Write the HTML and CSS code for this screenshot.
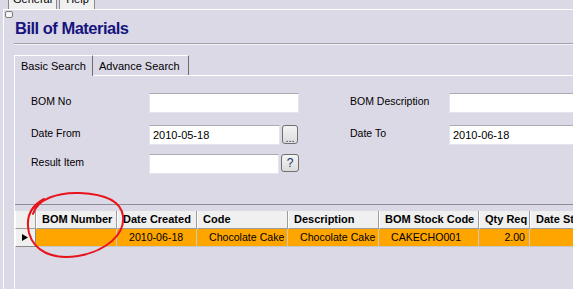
FILE: index.html
```html
<!DOCTYPE html>
<html>
<head>
  <meta charset="UTF-8">
  <title>Bill of Materials</title>
  <link rel="stylesheet" href="styles.css">
</head>
<body>
  <div class="top-tabs">
    <span class="top-tab">General</span>
    <span class="top-tab help">Help</span>
  </div>

  <div class="panel">
    <span class="panel-icon"></span>
    <h1 class="title">Bill of Materials</h1>
    <div class="rule"></div>

    <div class="tabs">
      <span class="tab active">Basic Search</span>
      <span class="tab">Advance Search</span>
    </div>

    <div class="tab-page">
      <div class="form">
        <div class="row">
          <label class="label">BOM No</label>
          <div class="field"><input class="input w150" type="text"></div>
          <label class="label">BOM Description</label>
          <div class="field"><input class="input wide" type="text"></div>
        </div>
        <div class="row gap12">
          <label class="label">Date From</label>
          <div class="field">
            <input class="input w131" type="text" value="2010-05-18">
            <button class="btn dots">...</button>
          </div>
          <label class="label">Date To</label>
          <div class="field"><input class="input wide" type="text" value="2010-06-18"></div>
        </div>
        <div class="row gap9">
          <label class="label">Result Item</label>
          <div class="field">
            <input class="input w130" type="text">
            <button class="btn ask">?</button>
          </div>
        </div>
      </div>

      <div class="grid-wrap">
        <div class="grid">
          <div class="grid-row head">
            <div class="cell rh"></div>
            <div class="cell">BOM Number</div>
            <div class="cell">Date Created</div>
            <div class="cell">Code</div>
            <div class="cell">Description</div>
            <div class="cell">BOM Stock Code</div>
            <div class="cell">Qty Req</div>
            <div class="cell">Date St</div>
          </div>
          <div class="grid-row data">
            <div class="cell rh">
              <svg width="6" height="7" viewBox="0 0 6 7"><polygon points="0,0 6,3.5 0,7" fill="#000"/></svg>
            </div>
            <div class="cell"></div>
            <div class="cell">2010-06-18</div>
            <div class="cell">Chocolate Cake</div>
            <div class="cell">Chocolate Cake</div>
            <div class="cell">CAKECHO001</div>
            <div class="cell num">2.00</div>
            <div class="cell"></div>
          </div>
        </div>
      </div>
    </div>
  </div>

  <!-- red marker circle drawn over the grid -->
  <svg class="annotation" width="573" height="289" viewBox="0 0 573 289">
    <path d="M33 214 C37 199 58 192 80 193 C104 194 121 201 123 216 C125 234 107 251 78 256 C52 260 34 251 29 233 C26 220 29 207 44 199"
          fill="none" stroke="#e8141c" stroke-width="2" stroke-linecap="round"/>
  </svg>
</body>
</html>
```

FILE: styles.css
```css
body {
  margin: 0;
  width: 573px;
  height: 289px;
  overflow: hidden;
  position: relative;
  background: #dcd9e7;
  font-family: "Liberation Sans", Arial, sans-serif;
  font-size: 11px;
  color: #000;
}

/* outer tab strip, mostly scrolled off the top */
.top-tabs {
  display: flex;
  align-items: flex-end;
  height: 9px;
  padding-left: 8px;
  gap: 2px;
  overflow: hidden;
}
.top-tab {
  flex: none;
  height: 20px;
  box-sizing: border-box;
  padding: 3px 4px 0;
  line-height: 13px;
  background: #f0f0f0;
  border: 1px solid #8a8a8a;
  border-bottom: 0;
  border-radius: 2px 2px 0 0;
}
.top-tab.help {
  padding: 3px 5px 0 6px;
}

.panel {
  margin-left: 3px;
  height: 290px;
  border-top: 1px solid #fff;
  border-left: 1px solid #fff;
}
.panel-icon {
  display: block;
  width: 6px;
  height: 5px;
  margin: 1px 0 0 1px;
  border: 1px solid #7a7a7a;
  border-radius: 2px;
  background: #f6f6f6;
}
.title {
  margin: 1px 0 0 11px;
  font-size: 16.5px;
  letter-spacing: -0.5px;
  line-height: 18px;
  font-weight: bold;
  color: #16147e;
}
.rule {
  margin: 6px 0 0 10px;
  border-top: 1px solid #a2a0a8;
  border-bottom: 1px solid #f4f2f8;
}

/* inner tabs */
.tabs {
  display: flex;
  margin: 10px 0 0 10px;
  height: 20px;
}
.tab {
  box-sizing: border-box;
  height: 20px;
  padding: 3px 6px 0 6px;
  line-height: 14px;
  border-top: 1px solid #fff;
  border-left: 1px solid #fff;
  border-right: 1px solid #6e6e6e;
}
.tab.active {
  width: 79px;
  position: relative;
  z-index: 1;
  background: #dcd9e7;
  height: 21px;
}
.tab:not(.active) {
  width: 96px;
  padding-left: 6px;
  border-left: 0;
}

.tab-page {
  margin-left: 10px;
  height: 220px;
  border-top: 1px solid #fff;
  border-left: 1px solid #fff;
}

.form {
  padding: 17px 0 0 16px;
}
.row {
  display: grid;
  grid-template-columns: 118px 201px 99px 200px;
  height: 20px;
}
.row.gap12 {
  margin-top: 12px;
}
.row.gap9 {
  margin-top: 9px;
}
.label {
  padding-top: 2px;
  font-size: 10.5px;
  line-height: 13px;
}
.field {
  display: flex;
  align-items: flex-start;
}
.input {
  box-sizing: border-box;
  height: 20px;
  margin: 0;
  padding: 0 3px;
  font-family: "Liberation Sans", Arial, sans-serif;
  font-size: 11px;
  color: #000;
  background: #fff;
  border: 1px solid #e3e4ec;
  border-top-color: #abaab2;
  outline: none;
}
.w150 { width: 150px; }
.w131 { width: 131px; }
.w130 { width: 130px; }
.wide { width: 200px; }

.btn {
  box-sizing: border-box;
  height: 19px;
  margin: 0;
  padding: 0;
  border: 1px solid #707070;
  border-radius: 3px;
  background: linear-gradient(#f4f4f4, #dcdcdc);
  font-family: "Liberation Sans", Arial, sans-serif;
  font-size: 11px;
  color: #1a2a6a;
}
.btn.dots {
  width: 16px;
  margin-left: 2px;
  line-height: 24px;
}
.btn.ask {
  width: 18px;
  height: 18px;
  margin-left: 2px;
  font-size: 12px;
}

/* results grid */
.grid-wrap {
  margin-top: 30px;
  padding-top: 6px;
  border-top: 1px solid #8e8c96;
  overflow: hidden;
}
.grid {
  width: 560px;
}
.grid-row {
  display: grid;
  grid-template-columns: 21px 81px 80px 91px 91px 100px 51px 45px;
  height: 18px;
}
.cell {
  box-sizing: border-box;
  overflow: hidden;
  white-space: nowrap;
  line-height: 17px;
}
.head .cell {
  padding-left: 5px;
  font-weight: bold;
  background: #f0f0f0;
  border-left: 1px solid #fff;
  border-right: 1px solid #9c9c9c;
  border-bottom: 1px solid #9c9c9c;
}
.data .cell {
  padding-left: 12px;
  font-size: 10.6px;
  background: #ffa500;
  border-right: 1px solid #c8c8c8;
  border-bottom: 1px solid #c8c8c8;
}
.data .cell.num {
  padding: 0 4px 0 0;
  text-align: right;
}
.data .cell.rh {
  display: flex;
  align-items: center;
  padding-left: 6px;
  background: #f0f0f0;
  border-left: 1px solid #fff;
  border-right: 1px solid #8a8a8a;
  border-bottom: 1px solid #8a8a8a;
}

.annotation {
  position: absolute;
  top: 0;
  left: 0;
  pointer-events: none;
}
```
